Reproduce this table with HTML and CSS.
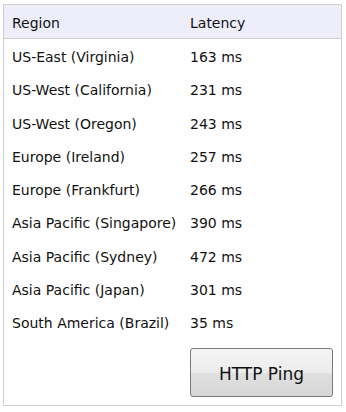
FILE: index.html
```html
<!DOCTYPE html>
<html>
<head>
<meta charset="utf-8">
<link rel="stylesheet" href="styles.css">
</head>
<body>
<div class="panel">
  <table class="latency">
    <thead>
      <tr><th class="c1">Region</th><th class="c2">Latency</th></tr>
    </thead>
    <tbody>
      <tr><td class="c1">US-East (Virginia)</td><td class="c2">163 ms</td></tr>
      <tr><td class="c1">US-West (California)</td><td class="c2">231 ms</td></tr>
      <tr><td class="c1">US-West (Oregon)</td><td class="c2">243 ms</td></tr>
      <tr><td class="c1">Europe (Ireland)</td><td class="c2">257 ms</td></tr>
      <tr><td class="c1">Europe (Frankfurt)</td><td class="c2">266 ms</td></tr>
      <tr><td class="c1">Asia Pacific (Singapore)</td><td class="c2">390 ms</td></tr>
      <tr><td class="c1">Asia Pacific (Sydney)</td><td class="c2">472 ms</td></tr>
      <tr><td class="c1">Asia Pacific (Japan)</td><td class="c2">301 ms</td></tr>
      <tr><td class="c1">South America (Brazil)</td><td class="c2">35 ms</td></tr>
    </tbody>
  </table>
  <div class="actions">
    <button class="ping">HTTP Ping</button>
  </div>
</div>
</body>
</html>
```

FILE: styles.css
```css
html, body {
  margin: 0;
  padding: 0;
  background: #ffffff;
}
body {
  padding: 4px 0 0 3px;
  font-family: "DejaVu Sans", Verdana, sans-serif;
  font-size: 14px;
  color: #111111;
}
.panel {
  width: 339px;
  height: 402px;
  border: 1px solid #cfcfcf;
  box-sizing: border-box;
}
.latency {
  width: 100%;
  border-collapse: collapse;
}
.latency th {
  background: #eeeefb;
  font-weight: normal;
  text-align: left;
  height: 31px;
  padding: 2px 0 0;
  border-bottom: 1px solid #cfcfcf;
}
.latency td {
  height: 30.25px;
  padding: 3px 0 0;
}
.c1 {
  padding-left: 8px !important;
  width: 178px;
}
.actions {
  display: flex;
  justify-content: flex-start;
  padding: 10px 0 0 186px;
}
.ping {
  width: 143px;
  height: 49px;
  border: 1px solid #7a7a7a;
  border-radius: 3px;
  background: linear-gradient(#f4f4f4 0%, #ececec 50%, #e0e0e0 52%, #d6d6d6 100%);
  font-family: "DejaVu Sans", Verdana, sans-serif;
  font-size: 17px;
  color: #111111;
  padding: 2px 0 0;
}
```
